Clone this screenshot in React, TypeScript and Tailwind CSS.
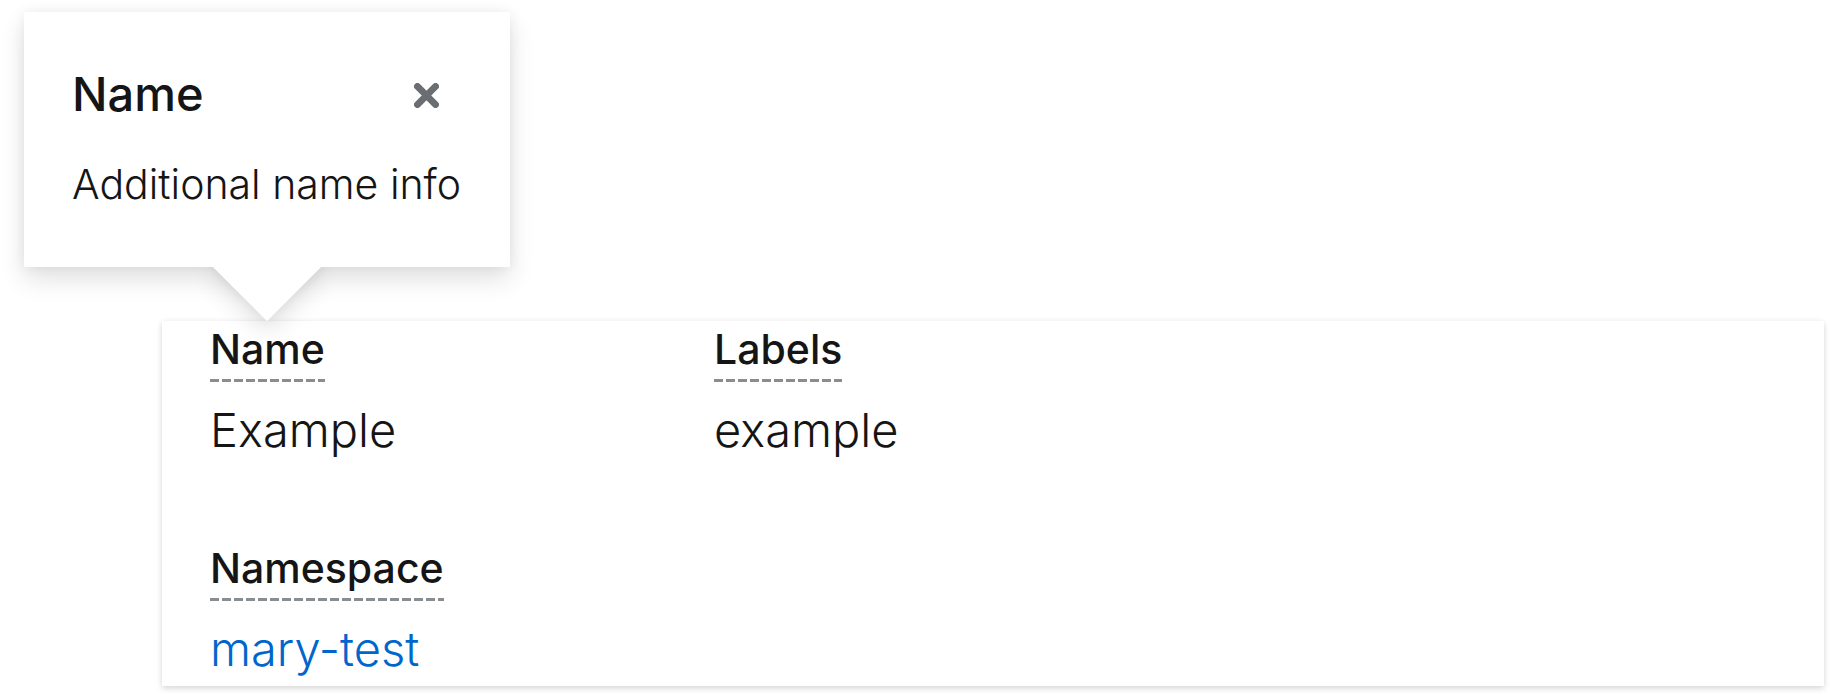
import type { ReactNode } from "react";

function Term({ children }: { children: ReactNode }) {
  return (
    <dt>
      <button
        type="button"
        className="block cursor-pointer bg-[repeating-linear-gradient(to_right,#8a8d90_0_9px,transparent_9px_12px)] bg-[length:100%_3px] bg-bottom-left bg-no-repeat pb-[5px] text-[41px] leading-[56px] font-medium"
      >
        {children}
      </button>
    </dt>
  );
}

function Group({ term, children }: { term: string; children: ReactNode }) {
  return (
    <div className="flex flex-col items-start gap-3">
      <Term>{term}</Term>
      <dd className="text-[47px] leading-[72px] font-light">{children}</dd>
    </div>
  );
}

function CloseIcon() {
  return (
    <svg viewBox="0 0 24 24" className="size-[25px]" aria-hidden="true">
      <path d="M3.3 3.3 20.7 20.7M20.7 3.3 3.3 20.7" fill="none" stroke="#6a6e73" strokeWidth="6.6" strokeLinecap="round" />
    </svg>
  );
}

function Popover() {
  return (
    <div
      role="dialog"
      aria-labelledby="popover-title"
      className="absolute bottom-[54px] left-6 w-[486px] shadow-[0_12px_24px_rgba(3,3,3,0.12),0_0_12px_rgba(3,3,3,0.06)]"
    >
      <div className="absolute -bottom-[38px] left-1/2 size-[76px] -translate-x-1/2 rotate-45 bg-white shadow-[8px_8px_24px_rgba(3,3,3,0.12),0_0_12px_rgba(3,3,3,0.06)]" />
      <div className="relative bg-white px-12 pt-[46px] pb-[53px]">
        <header className="flex items-center justify-between pr-[23px]">
          <h2 id="popover-title" className="text-[47px] leading-[72px] font-medium">
            Name
          </h2>
          <button type="button" aria-label="Close" className="cursor-pointer pt-[3px]">
            <CloseIcon />
          </button>
        </header>
        <p className="mt-6 text-[41px] leading-[60px] font-light whitespace-nowrap">Additional name info</p>
      </div>
      <div className="absolute top-full left-1/2 h-[54px] w-[108px] -translate-x-1/2 bg-white [clip-path:polygon(0_0,100%_0,50%_100%)]" />
    </div>
  );
}

export default function App() {
  return (
    <main className="bg-white font-['Inter',sans-serif] text-[#151515]">
      <div className="relative z-10 h-[321px]">
        <Popover />
      </div>
      <section className="mr-1.5 mb-2 ml-[162px] bg-white pr-[150px] pb-px pl-12 shadow-[0_3px_6px_rgba(3,3,3,0.12),0_0_6px_rgba(3,3,3,0.06)]">
        <dl className="grid grid-cols-3 gap-x-12">
          <div className="flex flex-col gap-[74px]">
            <Group term="Name">Example</Group>
            <Group term="Namespace">
              <a href="#mary-test" className="text-[#0066cc]">
                mary-test
              </a>
            </Group>
          </div>
          <Group term="Labels">example</Group>
        </dl>
      </section>
    </main>
  );
}
